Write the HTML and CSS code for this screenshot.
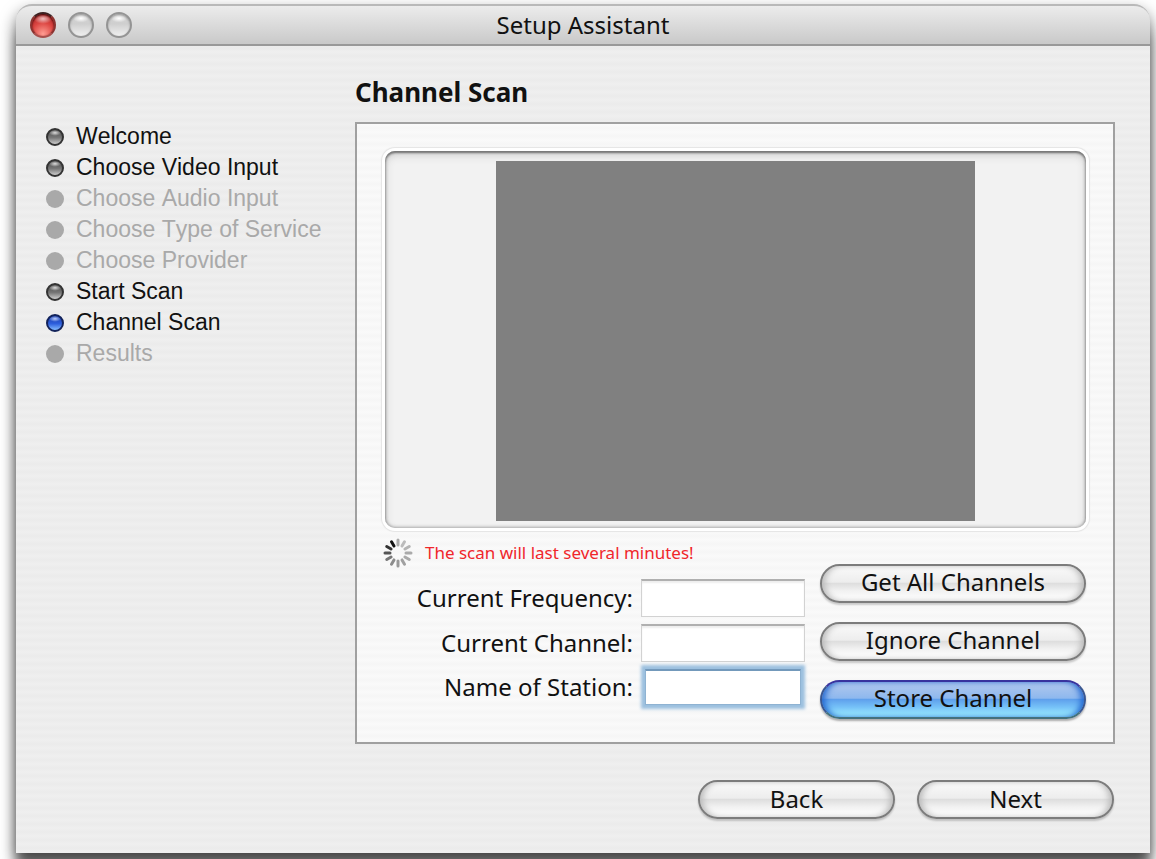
FILE: index.html
```html
<!DOCTYPE html>
<html lang="en">
<head>
<meta charset="utf-8">
<title>Setup Assistant</title>
<link rel="stylesheet" href="styles.css">
</head>
<body>
<div class="window">
  <header class="titlebar">
    <div class="lights">
      <button class="light light-close" type="button" aria-label="Close"></button>
      <button class="light" type="button" aria-label="Minimize"></button>
      <button class="light" type="button" aria-label="Zoom"></button>
    </div>
    <h1 class="title">Setup Assistant</h1>
  </header>
  <div class="content">
    <ol class="steps">
      <li class="step done">Welcome</li>
      <li class="step done">Choose Video Input</li>
      <li class="step">Choose Audio Input</li>
      <li class="step">Choose Type of Service</li>
      <li class="step">Choose Provider</li>
      <li class="step done">Start Scan</li>
      <li class="step current" aria-current="step">Channel Scan</li>
      <li class="step">Results</li>
    </ol>
    <main class="main">
      <h2 class="heading">Channel Scan</h2>
      <form class="panel">
        <div class="well"><div class="video"></div></div>
        <div class="controls">
          <div class="left">
            <p class="status">
              <svg class="spinner" viewBox="-15 -15 30 30" aria-hidden="true">
                <g stroke-width="3" stroke-linecap="round">
                  <path d="M0-8V-13" stroke="#aaa"/>
                  <path d="M0-8V-13" stroke="#bbb" transform="rotate(30)"/>
                  <path d="M0-8V-13" stroke="#b4b4b4" transform="rotate(60)"/>
                  <path d="M0-8V-13" stroke="#aaa" transform="rotate(90)"/>
                  <path d="M0-8V-13" stroke="#aaa" transform="rotate(120)"/>
                  <path d="M0-8V-13" stroke="#a0a0a0" transform="rotate(150)"/>
                  <path d="M0-8V-13" stroke="#999" transform="rotate(180)"/>
                  <path d="M0-8V-13" stroke="#8c8c8c" transform="rotate(210)"/>
                  <path d="M0-8V-13" stroke="#777" transform="rotate(240)"/>
                  <path d="M0-8V-13" stroke="#555" transform="rotate(270)"/>
                  <path d="M0-8V-13" stroke="#333" transform="rotate(300)"/>
                  <path d="M0-8V-13" stroke="#111" transform="rotate(330)"/>
                </g>
              </svg>
              <span>The scan will last several minutes!</span>
            </p>
            <div class="fields">
              <label for="frequency">Current Frequency:</label>
              <input class="field" id="frequency" type="text">
              <label for="channel">Current Channel:</label>
              <input class="field" id="channel" type="text">
              <label for="station">Name of Station:</label>
              <input class="field focused" id="station" type="text">
            </div>
          </div>
          <div class="actions">
            <button class="button" type="button">Get All Channels</button>
            <button class="button" type="button">Ignore Channel</button>
            <button class="button primary" type="button">Store Channel</button>
          </div>
        </div>
      </form>
      <nav class="pager">
        <button class="button" type="button">Back</button>
        <button class="button" type="button">Next</button>
      </nav>
    </main>
  </div>
</div>
</body>
</html>
```

FILE: styles.css
```css
*,
*::before {
  box-sizing: border-box;
}

body {
  margin: 0;
  padding: 4px 6px 6px 16px;
  min-height: 100vh;
  display: flex;
  background: #fff;
  color: #111;
  font-family: "Noto Sans", "Open Sans", sans-serif;
  font-size: 24px;
  line-height: 32px;
}

.window {
  flex: 1;
  display: flex;
  flex-direction: column;
  border-radius: 16px 16px 0 0;
  background: repeating-linear-gradient(#efefef 0, #ebebeb 4px, #efefef 8px);
  box-shadow: 0 8px 16px rgba(0, 0, 0, 0.6), 0 24px 12px rgba(0, 0, 0, 0.4);
}

.titlebar {
  display: grid;
  grid-template-columns: 1fr auto 1fr;
  align-items: center;
  height: 42px;
  padding: 0 14px;
  border-top: 2px solid #b9b9b9;
  border-bottom: 2px solid #999;
  border-radius: 16px 16px 0 0;
  background: linear-gradient(#ececec, #c9c9c9);
}

.lights {
  display: flex;
  gap: 12px;
}

.light {
  width: 26px;
  height: 26px;
  padding: 0;
  border: 2px solid #949494;
  border-radius: 50%;
  background: radial-gradient(ellipse 8px 4px at 50% 20%, #fff, transparent), linear-gradient(#d4d4d4, #cfcfcf 45%, #f0f0f0);
  box-shadow: inset 0 1px 2px #999;
}

.light-close {
  border-color: #3c2222 #8b3330 #a8504d;
  background: radial-gradient(ellipse 9px 5px at 50% 22%, #f0c0c0, transparent), radial-gradient(circle at 50% 90%, #ff9d93, #dc4642 50%, #b02a2a 85%);
  box-shadow: inset 0 1px 2px #400;
}

.title {
  margin: 0;
  font-size: 24px;
  font-weight: 400;
}

.content {
  flex: 1;
  display: grid;
  grid-template-columns: 339px 1fr;
  padding: 30px 35px 34px 0;
}

.steps {
  margin: 0;
  padding: 45px 0 0 30px;
  list-style: none;
  font-family: "Liberation Sans", Arial, sans-serif;
  font-size: 23px;
  font-kerning: none;
  line-height: 31px;
}

.step {
  display: flex;
  align-items: center;
  gap: 12px;
  color: #a9a9a9;
  white-space: nowrap;
}

.step::before {
  content: "";
  width: 18px;
  height: 18px;
  border-radius: 50%;
  background: #a9a9a9;
}

.done,
.current {
  color: #111;
}

.done::before {
  border: 2px solid #333;
  background: radial-gradient(ellipse 6px 3px at 50% 20%, #ddd, transparent), linear-gradient(#4a4a4a, #777 55%, #ccc);
}

.current::before {
  border: 2px solid #122259;
  background: radial-gradient(ellipse 6px 3px at 50% 20%, #bcd0ff, transparent), linear-gradient(#1c3da8, #2d5fdd 55%, #84bcff);
}

.main {
  display: flex;
  flex-direction: column;
}

.heading {
  margin: 0 0 14px;
  font-size: 26px;
  font-weight: 700;
}

.panel {
  padding: 25px 25px 23px 26px;
  border: 2px solid #a0a0a0;
  background: repeating-linear-gradient(#fafafa 0, #f6f6f6 4px, #fafafa 8px);
}

.well {
  display: flex;
  justify-content: center;
  padding: 10px 8px 7px;
  border-radius: 10px;
  margin: 2px;
  background: #f2f2f2;
  box-shadow: inset 0 2px 2px #777, inset 0 0 3px 1px #aaa, inset 0 4px 8px #ccc, 0 0 0 3px #fff, 0 0 1px 4px #e4e4e4;
}

.video {
  width: 70%;
  aspect-ratio: 4 / 3;
  background: #808080;
}

.controls {
  display: flex;
  justify-content: space-between;
  padding: 7px 2px 0 0;
}

.left {
  flex: 1;
}

.status {
  display: flex;
  align-items: center;
  gap: 12px;
  margin: 0 0 10px;
  color: #f0262b;
  font-size: 17px;
}

.spinner {
  width: 30px;
  height: 30px;
}

.fields {
  display: grid;
  grid-template-columns: 1fr 164px;
  align-items: center;
  gap: 7px 8px;
  padding-right: 15px;
}

.fields label {
  text-align: right;
}

.field {
  width: 100%;
  height: 38px;
  padding: 0 6px;
  border: 1px solid #d2d2d2;
  border-top: 2px solid #b0b0b0;
  border-radius: 0;
  outline: 0;
  background: #fff;
  font: inherit;
  box-shadow: inset 0 2px 2px #eee;
}

.focused {
  justify-self: center;
  width: 156px;
  height: 36px;
  border: 1px solid #8fb3d2;
  border-top: 2px solid #7399bb;
  box-shadow: 0 0 3px 4px #9cc0df;
}

.actions {
  display: flex;
  flex-direction: column;
  gap: 19px;
  width: 266px;
  padding-top: 27px;
}

.button {
  height: 39px;
  padding: 0 0 2px;
  border: 2px solid #7c7c7c;
  border-radius: 20px;
  background: linear-gradient(#fafafa, #ededed 46%, #dedede 50%, #f2f2f2 72%, #fff);
  box-shadow: 0 2px 2px rgba(0, 0, 0, 0.2), inset 5px 0 6px -2px #bbb, inset -5px 0 6px -2px #bbb;
  color: #111;
  font: inherit;
}

.primary {
  border-color: #38339e #3a5791 #44717d;
  background: linear-gradient(#b3c9ed, #8eb8ee 46%, #5fa0ec 50%, #76c2f8 72%, #a4f4ff);
  box-shadow: 0 2px 2px rgba(0, 0, 0, 0.3), inset 5px 0 6px -2px #2468d0, inset -5px 0 6px -2px #2468d0;
}

.pager {
  display: flex;
  justify-content: flex-end;
  gap: 22px;
  margin-top: auto;
  padding-right: 1px;
}

.pager .button {
  width: 197px;
}
```
